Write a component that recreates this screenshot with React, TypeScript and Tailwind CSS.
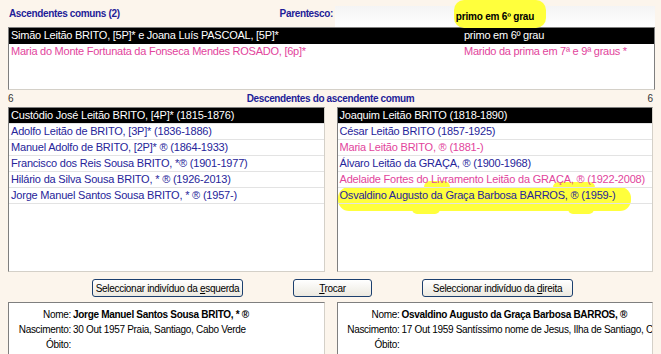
import React from "react";

const BLUE = "text-[#1f1d98]";
const PINK = "text-[#e2449c]";
const HEAD = "text-[10px] font-bold tracking-[-0.35px]";

type Row = { text: string; pink?: boolean; selected?: boolean };

const leftRows: Row[] = [
  { text: "Custódio José Leitão BRITO, [4P]* (1815-1876)", selected: true },
  { text: "Adolfo Leitão de BRITO, [3P]* (1836-1886)" },
  { text: "Manuel Adolfo de BRITO, [2P]* ® (1864-1933)" },
  { text: "Francisco dos Reis Sousa BRITO, *® (1901-1977)" },
  { text: "Hilário da Silva Sousa BRITO, * ® (1926-2013)" },
  { text: "Jorge Manuel Santos Sousa BRITO, * ® (1957-)" },
];

const rightRows: Row[] = [
  { text: "Joaquim Leitão BRITO (1818-1890)", selected: true },
  { text: "César Leitão BRITO (1857-1925)" },
  { text: "Maria Leitão BRITO, ® (1881-)", pink: true },
  { text: "Álvaro Leitão da GRAÇA, ® (1900-1968)" },
  { text: "Adelaide Fortes do Livramento Leitão da GRAÇA, ® (1922-2008)", pink: true },
  { text: "Osvaldino Augusto da Graça Barbosa BARROS, ® (1959-)" },
];

function ListBox({ rows, children }: { rows: Row[]; children?: React.ReactNode }) {
  return (
    <div className="relative h-[165px] flex-1 overflow-hidden border border-t-[#7f7f7f] border-l-[#7f7f7f] border-r-[#d4d0c8] border-b-[#d4d0c8] bg-white">
      {children}
      {rows.map((r) => (
        <div
          key={r.text}
          className={`relative h-[16px] whitespace-nowrap border-b border-[#e3e3e3] pl-[2px] text-[11px] leading-[15px] tracking-[-0.2px] ${
            r.selected ? "bg-black text-white" : r.pink ? PINK : "text-[#26249a]"
          }`}
        >
          {r.text}
        </div>
      ))}
    </div>
  );
}

function XpButton({ children, className = "" }: { children: React.ReactNode; className?: string }) {
  return (
    <button
      className={`h-[18px] whitespace-nowrap rounded-[3px] border border-[#1c3f6e] bg-gradient-to-b from-white to-[#ece9e0] text-[10px] leading-[15px] tracking-[-0.3px] text-black ${className}`}
    >
      {children}
    </button>
  );
}

function InfoPanel({ name, born }: { name: string; born: string }) {
  return (
    <div className="h-[60px] min-w-0 flex-1 overflow-hidden border border-t-[#7f7f7f] border-l-[#7f7f7f] border-r-[#d4d0c8] bg-white pt-[4px] text-[10px] leading-[15px] tracking-[-0.3px] text-black">
      <div className="grid grid-cols-[62px_1fr] whitespace-nowrap">
        <span className="text-right">Nome:</span>
        <span className="overflow-hidden pl-[2px] font-bold">{name}</span>
        <span className="text-right">Nascimento:</span>
        <span className="overflow-hidden pl-[2px]">{born}</span>
        <span className="text-right">Óbito:</span>
        <span />
      </div>
    </div>
  );
}

export default function App() {
  return (
    <div className="relative h-[354px] w-[661px] overflow-hidden bg-[#fcf5ec] font-['Liberation_Sans',Arial,sans-serif]">
      {/* header */}
      <div className="flex h-[27px] items-end pl-[9px] pr-[6px]">
        <span className={`mb-[6px] flex-1 ${HEAD} ${BLUE}`}>Ascendentes comuns (2)</span>
        <span className={`mb-[6px] mr-[2px] ${HEAD} ${BLUE}`}>Parentesco:</span>
        <div className="relative flex h-[21px] w-[320px] justify-center bg-gradient-to-b from-[#f4f4f4] to-white">
          <span className="absolute left-[119px] top-[-6px] h-[28px] w-[92px] rounded-[10px] bg-[#ffff3c]" />
          <span className="relative mt-[3px] text-[10px] font-bold tracking-[-0.2px] text-black">primo em 6º grau</span>
        </div>
      </div>

      {/* ascendentes list */}
      <div className="mx-[8px] h-[63px] w-[647px] border border-t-[#7f7f7f] border-l-[#7f7f7f] border-r-[#7f7f7f] border-b-[#d4d0c8] bg-white text-[11px] leading-[15px] tracking-[-0.25px]">
        <div className="grid h-[16px] grid-cols-[453px_1fr] whitespace-nowrap bg-black pl-[2px] text-white">
          <span>Simão Leitão BRITO, [5P]* e Joana Luís PASCOAL, [5P]*</span>
          <span>primo em 6º grau</span>
        </div>
        <div className={`grid h-[16px] grid-cols-[453px_1fr] whitespace-nowrap pl-[2px] ${PINK}`}>
          <span>Maria do Monte Fortunata da Fonseca Mendes ROSADO, [6p]*</span>
          <span>Marido da prima em 7ª e 9ª graus *</span>
        </div>
      </div>

      {/* descendentes header */}
      <div className="flex h-[17px] items-center px-[8px] text-[10px]">
        <span className="w-[20px] text-[#333]">6</span>
        <span className={`flex-1 text-center ${HEAD} ${BLUE}`}>Descendentes do ascendente comum</span>
        <span className="w-[20px] text-right text-[#333]">6</span>
      </div>

      {/* two lists */}
      <div className="flex gap-[12px] pl-[8px] pr-[8px]">
        <ListBox rows={leftRows} />
        <ListBox rows={rightRows}>
          {/* highlighter marks */}
          <span className="absolute left-0 top-[79px] h-[24px] w-[293px] rounded-[11px] bg-[#ffff3c]" />
          <span className="absolute left-[86px] top-[73px] h-[12px] w-[26px] rounded-full bg-[#ffff3c]" />
          <span className="absolute left-[215px] top-[74px] h-[11px] w-[42px] rounded-full bg-[#ffff3c]" />
          <span className="absolute left-[74px] top-[96px] h-[10px] w-[28px] rounded-full bg-[#ffff3c]" />
          <span className="absolute left-[230px] top-[96px] h-[10px] w-[26px] rounded-full bg-[#ffff3c]" />
        </ListBox>
      </div>

      {/* buttons */}
      <div className="relative flex h-[30px] items-center pt-[2px]">
        <XpButton className="ml-[92px] w-[151px]">
          Seleccionar indivíduo da <u>e</u>squerda
        </XpButton>
        <XpButton className="ml-[50px] w-[79px]">
          <u>T</u>rocar
        </XpButton>
        <XpButton className="ml-[50px] w-[151px]">
          Seleccionar indivíduo da <u>d</u>ireita
        </XpButton>
      </div>

      {/* info panels */}
      <div className="flex gap-[12px] px-[8px]">
        <InfoPanel name="Jorge Manuel Santos Sousa BRITO, * ®" born="30 Out 1957 Praia, Santiago, Cabo Verde" />
        <InfoPanel
          name="Osvaldino Augusto da Graça Barbosa BARROS, ®"
          born="17 Out 1959 Santíssimo nome de Jesus, Ilha de Santiago, Cabo Verde"
        />
      </div>
    </div>
  );
}
